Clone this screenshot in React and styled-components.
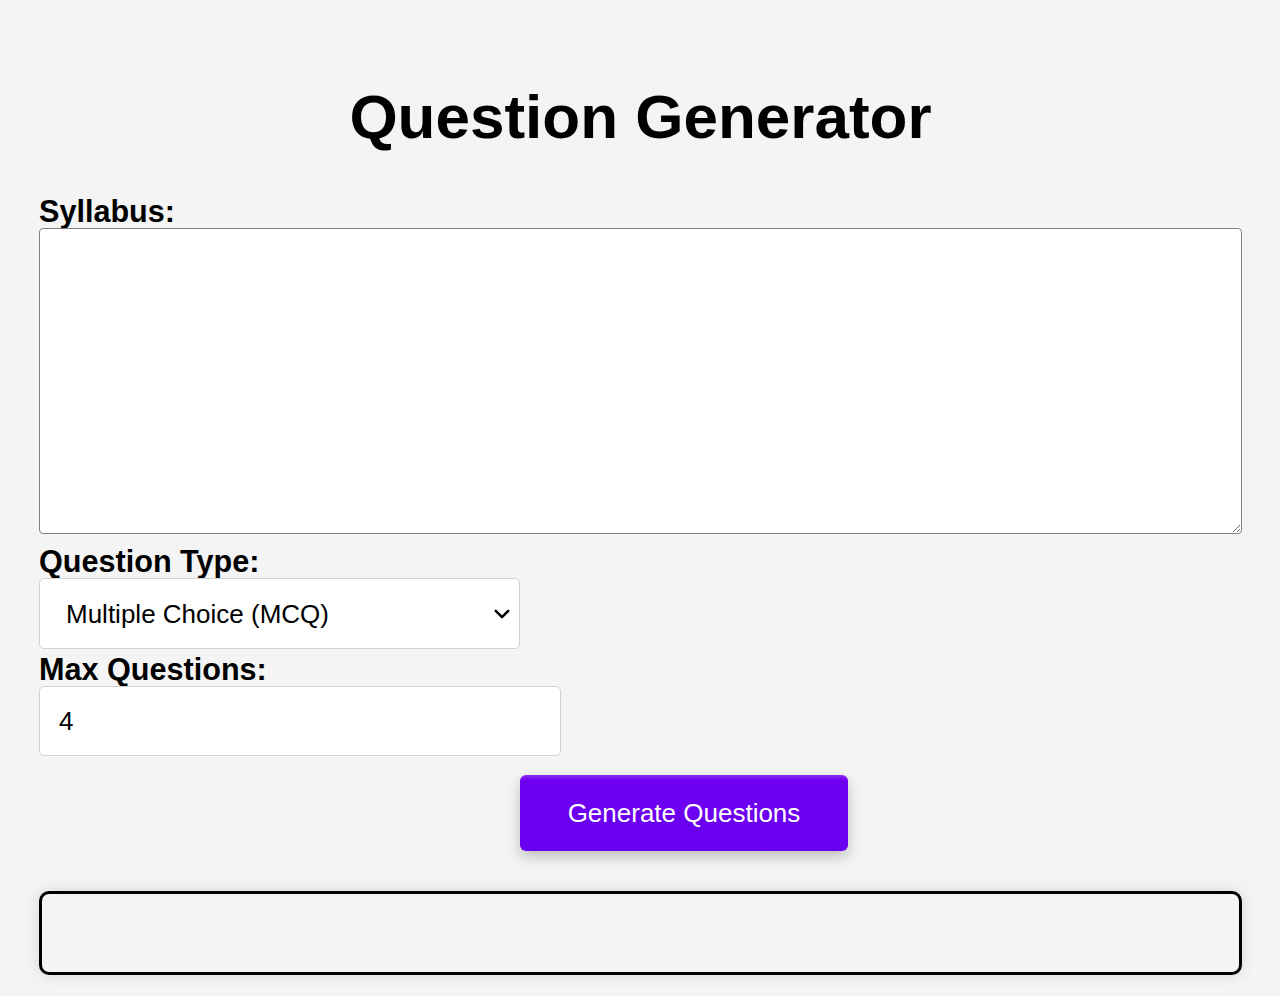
import styled, { createGlobalStyle } from "styled-components";

const GlobalStyle = createGlobalStyle`
    body {
        margin: 0;
        background-color: #f4f4f4;
        font-family: "Liberation Sans", Arial, sans-serif;
    }
`;

function App() {
    return (
        <Page>
            <GlobalStyle />
            <Title>Question Generator</Title>

            <Label htmlFor="syllabus">Syllabus:</Label>
            <TextArea id="syllabus" />

            <Label htmlFor="qtype" gap="10px">Question Type:</Label>
            <SelectWrap>
                <Select id="qtype" defaultValue="mcq">
                    <option value="mcq">Multiple Choice (MCQ)</option>
                    <option value="short">Short Answer</option>
                    <option value="tf">True / False</option>
                </Select>
                <Chevron viewBox="0 0 16 16">
                    <path d="M3 5.5l5 5 5-5" fill="none" stroke="#000" strokeWidth="2" strokeLinecap="round" strokeLinejoin="round" />
                </Chevron>
            </SelectWrap>

            <Label htmlFor="maxq" gap="3px">Max Questions:</Label>
            <Input id="maxq" type="text" defaultValue="4" />

            <Button>Generate Questions</Button>

            <Output />
        </Page>
    );
}

const Page = styled.div`
    display: flex;
    flex-direction: column;
    padding: 82px 38px 22px 39px;
    box-sizing: border-box;
`;

const Title = styled.h1`
    margin: 0 0 43px 0;
    font-size: 62px;
    line-height: 69px;
    font-weight: 700;
    text-align: center;
    color: #000;
`;

const Label = styled.label`
    display: block;
    margin-top: ${(props) => props.gap || "0"};
    font-size: 30.6px;
    line-height: 34px;
    font-weight: 700;
    color: #000;
`;

const TextArea = styled.textarea`
    display: block;
    width: 100%;
    height: 306px;
    box-sizing: border-box;
    border: 1.5px solid #808080;
    border-radius: 4px;
    background: #fff;
    font-family: inherit;
    font-size: 26px;
    resize: both;
`;

const SelectWrap = styled.div`
    position: relative;
    width: 481px;
`;

const Select = styled.select`
    display: block;
    width: 100%;
    height: 71px;
    box-sizing: border-box;
    padding: 0 40px 0 26px;
    border: 1.5px solid #d2d2d2;
    border-radius: 5px;
    background: #fff;
    appearance: none;
    font-family: inherit;
    font-size: 26px;
    color: #000;
`;

const Chevron = styled.svg`
    position: absolute;
    right: 8px;
    top: 26px;
    width: 20px;
    height: 20px;
    pointer-events: none;
`;

const Input = styled.input`
    display: block;
    width: 522px;
    height: 70px;
    box-sizing: border-box;
    padding: 0 19px;
    border: 1.5px solid #d2d2d2;
    border-radius: 5px;
    background: #fff;
    font-family: inherit;
    font-size: 26px;
    color: #000;
`;

const Button = styled.button`
    align-self: flex-start;
    margin: 19px 0 0 481px;
    width: 328px;
    height: 76px;
    border: none;
    border-radius: 6px;
    background: linear-gradient(#8a30f4 0%, #6e00f0 7%, #6a00f0 100%);
    box-shadow: 0 6px 14px rgba(0, 0, 0, 0.22);
    color: #fff;
    font-family: inherit;
    font-size: 26px;
    cursor: pointer;
`;

const Output = styled.div`
    margin-top: 40px;
    height: 84px;
    box-sizing: border-box;
    border: 3.5px solid #000;
    border-radius: 10px;
    background: #f4f4f4;
    box-shadow: 0 0 15px rgba(0, 0, 0, 0.12);
`;

export default App;
